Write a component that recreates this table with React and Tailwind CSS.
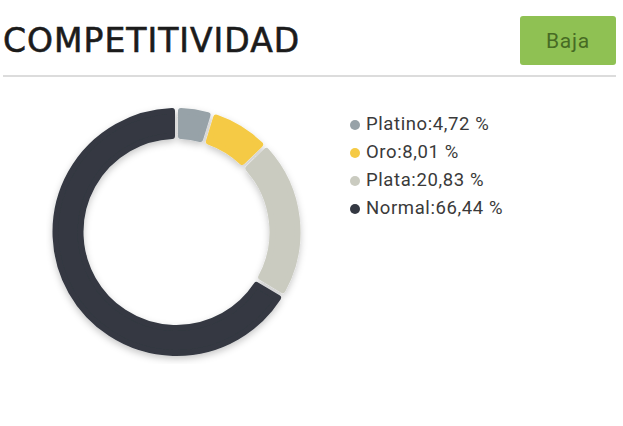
import React from 'react'

const datos = [
  { nombre: 'Platino', valor: 4.72, color: '#97a2a8' },
  { nombre: 'Oro', valor: 8.01, color: '#f5ca45' },
  { nombre: 'Plata', valor: 20.83, color: '#cacbc0' },
  { nombre: 'Normal', valor: 66.44, color: '#343842' },
]

const CX = 130.5
const CY = 130
const R_EXT = 124
const R_INT = 93
const GAP = 3
const ROUND = 3

function punto(r, ang) {
  const rad = (ang - 90) * Math.PI / 180
  return [CX + r * Math.cos(rad), CY + r * Math.sin(rad)]
}

// sector de anillo encogido para que el trazo redondee las esquinas
function sector(a0, a1) {
  const ro = R_EXT - ROUND
  const ri = R_INT + ROUND
  const pad = GAP / 2 + ROUND
  const s0o = a0 + (pad / ro) * 180 / Math.PI
  const s1o = a1 - (pad / ro) * 180 / Math.PI
  const s0i = a0 + (pad / ri) * 180 / Math.PI
  const s1i = a1 - (pad / ri) * 180 / Math.PI
  const grande = s1o - s0o > 180 ? 1 : 0
  const grandeI = s1i - s0i > 180 ? 1 : 0
  const [x1, y1] = punto(ro, s0o)
  const [x2, y2] = punto(ro, s1o)
  const [x3, y3] = punto(ri, s1i)
  const [x4, y4] = punto(ri, s0i)
  return `M${x1} ${y1} A${ro} ${ro} 0 ${grande} 1 ${x2} ${y2} L${x3} ${y3} A${ri} ${ri} 0 ${grandeI} 0 ${x4} ${y4} Z`
}

function Dona() {
  let acum = 0
  const total = datos.reduce((s, d) => s + d.valor, 0)
  return (
    <svg width="262" height="262" viewBox="0 0 262 262" className="shrink-0">
      <defs>
        <filter id="sombra" x="-20%" y="-20%" width="140%" height="140%">
          <feDropShadow dx="0" dy="3" stdDeviation="3.5" floodColor="#000" floodOpacity="0.22" />
        </filter>
      </defs>
      <g filter="url(#sombra)">
        {datos.map(d => {
          const a0 = acum / total * 360
          acum += d.valor
          const a1 = acum / total * 360
          return (
            <path
              key={d.nombre}
              d={sector(a0, a1)}
              fill={d.color}
              stroke={d.color}
              strokeWidth={ROUND * 2}
              strokeLinejoin="round"
            />
          )
        })}
      </g>
    </svg>
  )
}

export default function App() {
  return (
    <div className="w-[623px] h-[426px] bg-white overflow-hidden">

      {/* Encabezado */}
      <div className="flex items-center justify-between pt-4 pl-[3px] pr-[7px]">
        <h1
          className="text-[33px] leading-[33px] tracking-[1px] text-[#1b1b1b] [-webkit-text-stroke:0.6px_#1b1b1b]"
          style={{ fontFamily: '"DejaVu Sans", sans-serif' }}
        >
          COMPETITIVIDAD
        </h1>
        <div
          className="w-[96px] h-[49px] bg-[#8fc153] rounded-[3px] flex items-center justify-center pt-[3px] text-[21px] tracking-[0.8px] text-[#476b24]"
          style={{ fontFamily: 'Roboto, sans-serif' }}
        >
          Baja
        </div>
      </div>
      <div className="mt-[10px] ml-[3px] mr-[7px] h-[2px] bg-[#dcdcdc]" />

      {/* Grafico y leyenda */}
      <div className="flex items-start">
        <div className="mt-[25px] ml-[46px]">
          <Dona />
        </div>
        <ul className="mt-[34px] ml-[42px]" style={{ fontFamily: 'Roboto, sans-serif' }}>
          {datos.map(d => (
            <li key={d.nombre} className="flex items-center gap-[6px] h-[28px] text-[18.5px] tracking-[0.6px] text-[#3a3a3a]">
              <span className="w-[10px] h-[10px] rounded-full" style={{ backgroundColor: d.color }} />
              <span>{d.nombre}:{d.valor.toFixed(2).replace('.', ',')} %</span>
            </li>
          ))}
        </ul>
      </div>

    </div>
  )
}
